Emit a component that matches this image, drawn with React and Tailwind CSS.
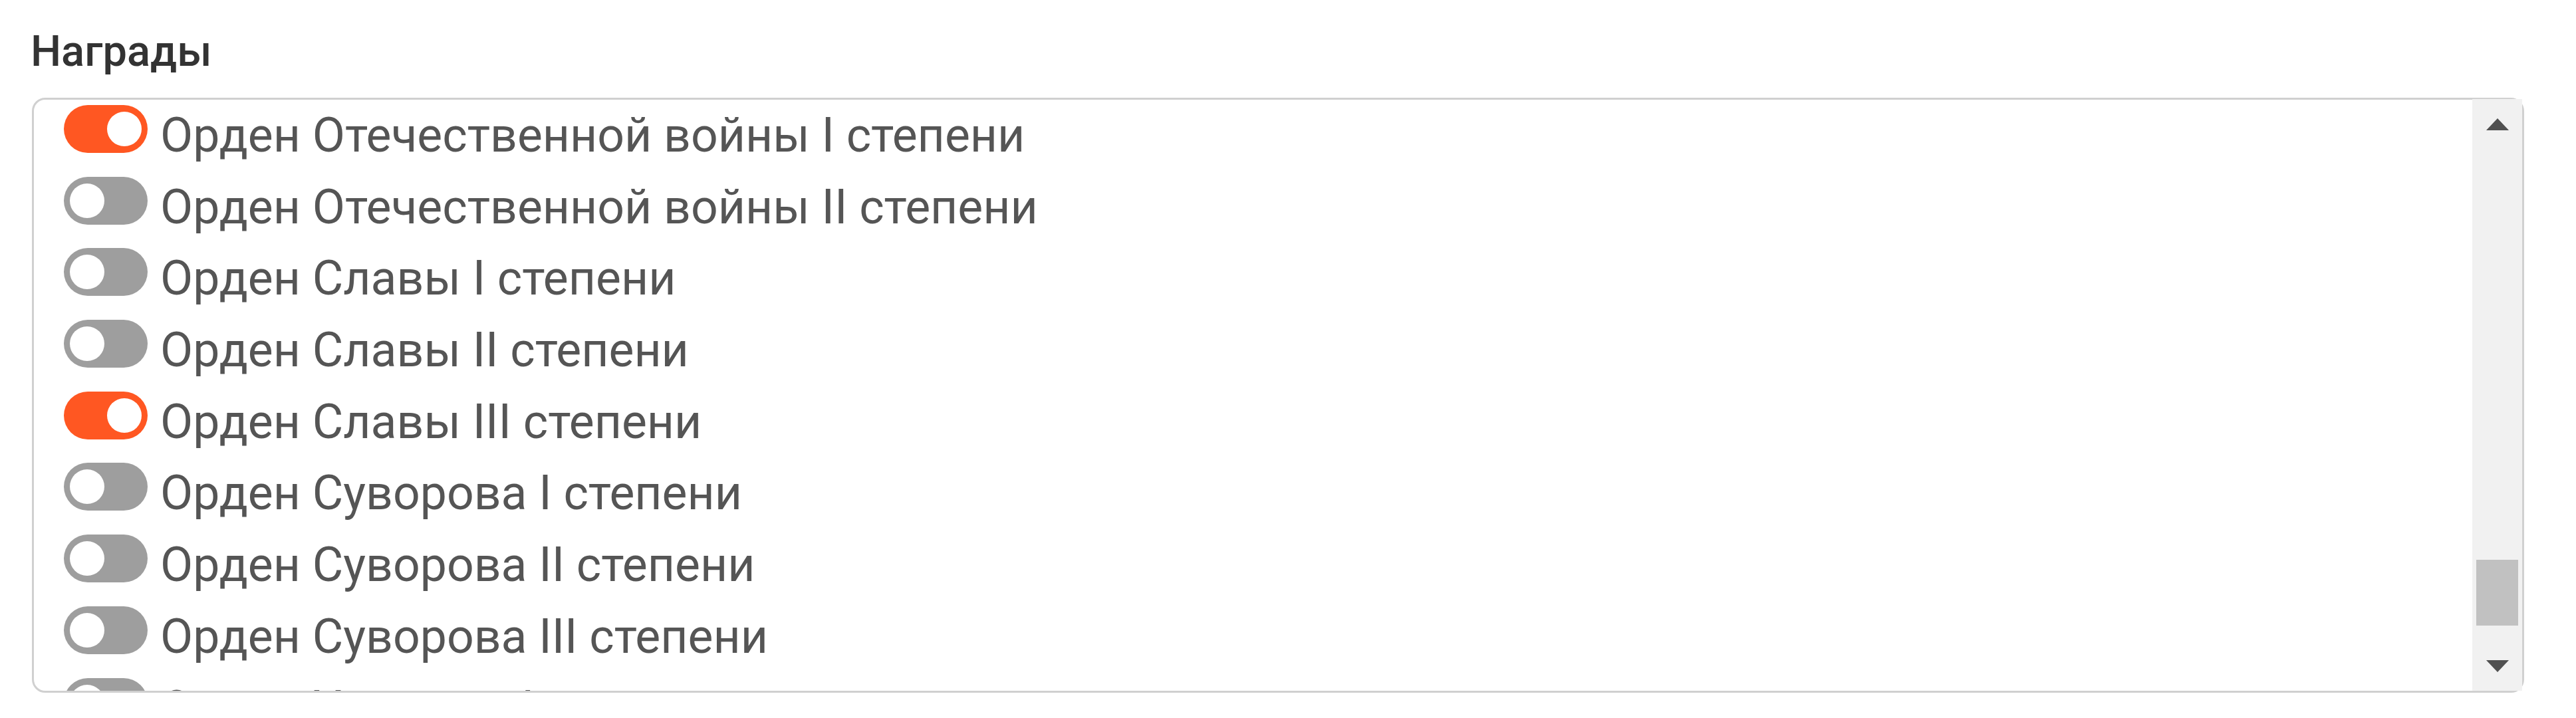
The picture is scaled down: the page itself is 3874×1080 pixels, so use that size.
import React from 'react'

const awards = [
  { name: 'Орден Отечественной войны I степени', on: true },
  { name: 'Орден Отечественной войны II степени', on: false },
  { name: 'Орден Славы I степени', on: false },
  { name: 'Орден Славы II степени', on: false },
  { name: 'Орден Славы III степени', on: true },
  { name: 'Орден Суворова I степени', on: false },
  { name: 'Орден Суворова II степени', on: false },
  { name: 'Орден Суворова III степени', on: false },
  { name: 'Орден Ушакова I степени', on: false },
]

function Toggle({ on }) {
  return (
    <span
      className={
        'mt-[8px] flex h-[72px] w-[126px] shrink-0 items-center rounded-full px-[9px] ' +
        (on ? 'justify-end bg-[#ff5722]' : 'justify-start bg-[#9e9e9e]')
      }
    >
      <span className="h-[52px] w-[52px] rounded-full bg-white" />
    </span>
  )
}

function Arrow({ down }) {
  return (
    <div className="flex h-[75px] items-center justify-center">
      <svg width="34" height="18" viewBox="0 0 34 18" className="fill-[#505050]">
        {down ? <path d="M0 0h34L17 18z" /> : <path d="M17 0l17 18H0z" />}
      </svg>
    </div>
  )
}

export default function App() {
  return (
    <div className="min-h-screen bg-white pt-[28px] pl-[46px] pr-[78px] font-['Roboto',sans-serif]">
      <label className="mb-[20px] block text-[65px] leading-[99px] font-medium text-[#333]">Награды</label>

      <div className="ml-[2px] flex h-[895px] rounded-[20px] border-[3px] border-[#d0d0d0] bg-white">
        {/* List */}
        <div className="flex-1 overflow-hidden rounded-l-[17px] pl-[45px]">
          {awards.map((a) => (
            <div key={a.name} className="flex h-[107.7px] items-start gap-[19px]">
              <Toggle on={a.on} />
              <span className="whitespace-nowrap text-[71.5px] leading-[107.7px] text-[#555]">{a.name}</span>
            </div>
          ))}
        </div>

        {/* Scrollbar */}
        <div className="-mt-[1px] flex w-[75px] flex-col bg-[#f1f1f1]">
          <Arrow />
          <div className="flex flex-1 flex-col justify-end px-[6px] pb-[23px]">
            <div className="h-[99px] bg-[#c1c1c1]" />
          </div>
          <Arrow down />
        </div>
      </div>
    </div>
  )
}
